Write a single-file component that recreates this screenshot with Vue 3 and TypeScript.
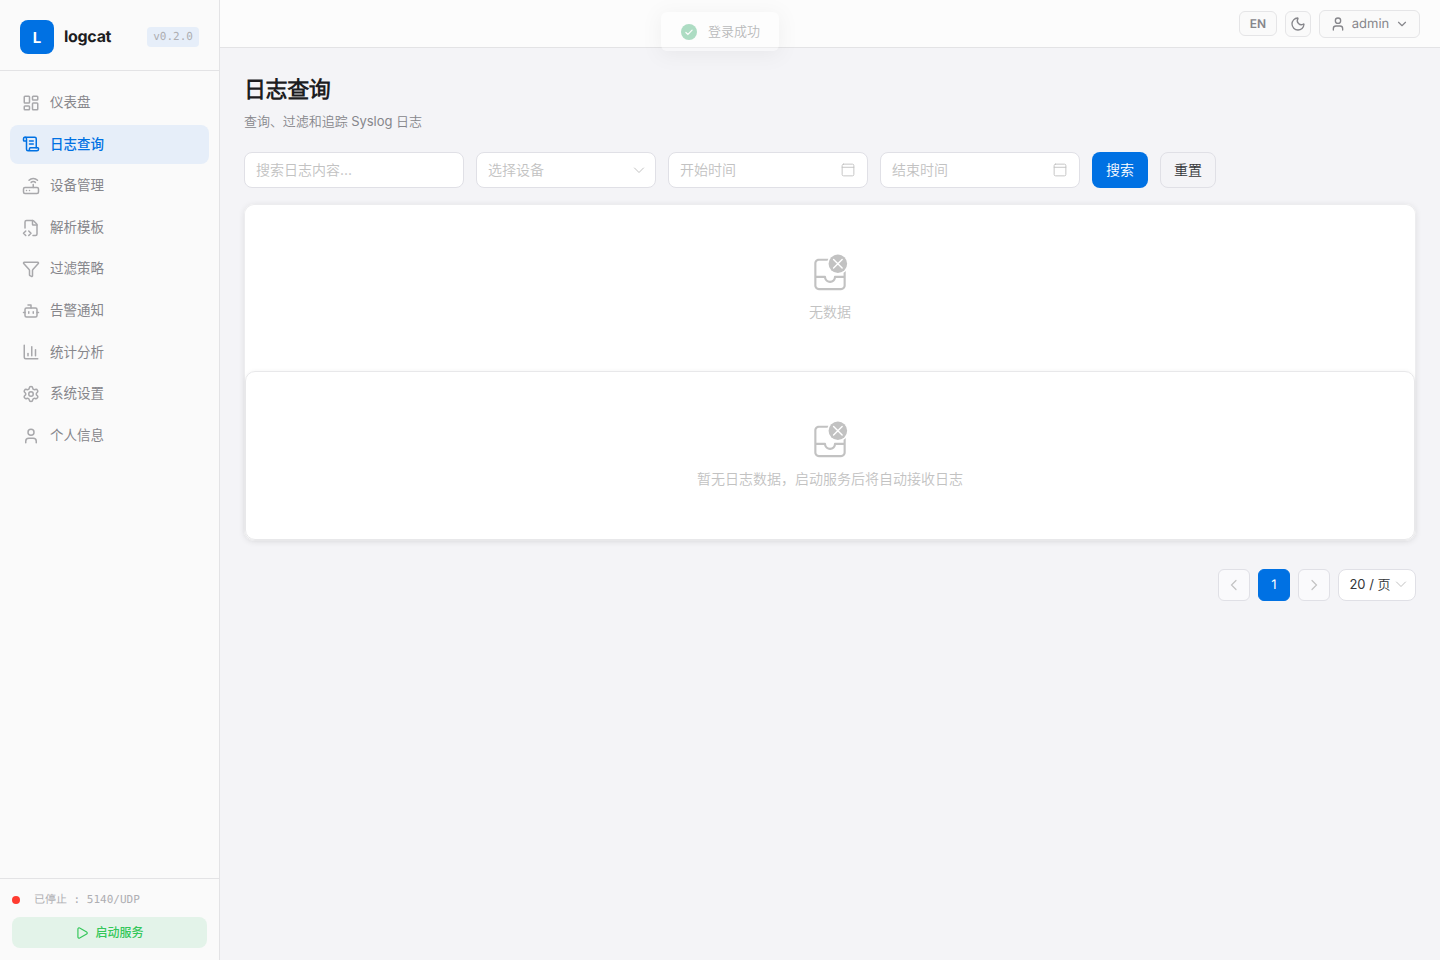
<script setup lang="ts">
interface NavItem {
  label: string
  paths: string[]
  active?: boolean
}

const navItems: NavItem[] = [
  {
    label: '仪表盘',
    paths: [
      'M4 3h5a1 1 0 0 1 1 1v7a1 1 0 0 1-1 1H4a1 1 0 0 1-1-1V4a1 1 0 0 1 1-1z',
      'M15 3h5a1 1 0 0 1 1 1v3a1 1 0 0 1-1 1h-5a1 1 0 0 1-1-1V4a1 1 0 0 1 1-1z',
      'M15 12h5a1 1 0 0 1 1 1v7a1 1 0 0 1-1 1h-5a1 1 0 0 1-1-1v-7a1 1 0 0 1 1-1z',
      'M4 16h5a1 1 0 0 1 1 1v3a1 1 0 0 1-1 1H4a1 1 0 0 1-1-1v-3a1 1 0 0 1 1-1z',
    ],
  },
  {
    label: '日志查询',
    active: true,
    paths: [
      'M15 12h-5',
      'M15 8h-5',
      'M19 17V5a2 2 0 0 0-2-2H4',
      'M8 21h12a2 2 0 0 0 2-2v-1a1 1 0 0 0-1-1H11a1 1 0 0 0-1 1v1a2 2 0 1 1-4 0V5a2 2 0 1 0-4 0v2a1 1 0 0 0 1 1h3',
    ],
  },
  {
    label: '设备管理',
    paths: [
      'M4 14h16a2 2 0 0 1 2 2v4a2 2 0 0 1-2 2H4a2 2 0 0 1-2-2v-4a2 2 0 0 1 2-2z',
      'M6.01 18H6',
      'M10.01 18H10',
      'M15 10v4',
      'M17.84 7.17a4 4 0 0 0-5.66 0',
      'M20.66 4.34a8 8 0 0 0-11.31 0',
    ],
  },
  {
    label: '解析模板',
    paths: [
      'M4 12.15V4a2 2 0 0 1 2-2h8a2.4 2.4 0 0 1 1.706.706l3.588 3.588A2.4 2.4 0 0 1 20 8v12a2 2 0 0 1-2 2h-3.35',
      'M14 2v5a1 1 0 0 0 1 1h5',
      'm5 16-3 3 3 3',
      'm9 22 3-3-3-3',
    ],
  },
  {
    label: '过滤策略',
    paths: [
      'M10 20a1 1 0 0 0 .553.895l2 1A1 1 0 0 0 14 21v-7a2 2 0 0 1 .517-1.341L21.74 4.67A1 1 0 0 0 21 3H3a1 1 0 0 0-.742 1.67l7.225 7.989A2 2 0 0 1 10 14z',
    ],
  },
  {
    label: '告警通知',
    paths: [
      'M12 8V4H8',
      'M6 8h12a2 2 0 0 1 2 2v8a2 2 0 0 1-2 2H6a2 2 0 0 1-2-2v-8a2 2 0 0 1 2-2z',
      'M2 14h2',
      'M20 14h2',
      'M15 13v2',
      'M9 13v2',
    ],
  },
  {
    label: '统计分析',
    paths: ['M3 3v16a2 2 0 0 0 2 2h16', 'M18 17V9', 'M13 17V5', 'M8 17v-3'],
  },
  {
    label: '系统设置',
    paths: [
      'M9.671 4.136a2.34 2.34 0 0 1 4.659 0 2.34 2.34 0 0 0 3.319 1.915 2.34 2.34 0 0 1 2.33 4.033 2.34 2.34 0 0 0 0 3.831 2.34 2.34 0 0 1-2.33 4.033 2.34 2.34 0 0 0-3.319 1.915 2.34 2.34 0 0 1-4.659 0 2.34 2.34 0 0 0-3.32-1.915 2.34 2.34 0 0 1-2.33-4.033 2.34 2.34 0 0 0 0-3.831A2.34 2.34 0 0 1 6.35 6.051a2.34 2.34 0 0 0 3.319-1.915',
      'M9 12a3 3 0 1 0 6 0a3 3 0 1 0-6 0',
    ],
  },
  {
    label: '个人信息',
    paths: ['M19 21v-2a4 4 0 0 0-4-4H9a4 4 0 0 0-4 4v2', 'M8 7a4 4 0 1 0 8 0a4 4 0 1 0-8 0'],
  },
]

const datePlaceholders: string[] = ['开始时间', '结束时间']
const emptyStates: string[] = ['无数据', '暂无日志数据，启动服务后将自动接收日志']
</script>

<template>
  <div class="app">
    <aside class="sidebar">
      <div class="brand">
        <div class="logo">L</div>
        <span class="name">logcat</span>
        <span class="version">v0.2.0</span>
      </div>
      <nav class="nav">
        <a v-for="item in navItems" :key="item.label" class="nav-item" :class="{ active: item.active }">
          <svg class="line-icon" width="18" height="18" viewBox="0 0 24 24">
            <path v-for="d in item.paths" :key="d" :d="d" />
          </svg>
          <span>{{ item.label }}</span>
        </a>
      </nav>
      <div class="service">
        <div class="status"><i class="dot"></i><span>已停止 : 5140/UDP</span></div>
        <button class="start">
          <svg class="line-icon" width="14" height="14" viewBox="0 0 24 24">
            <path d="M5 5a2 2 0 0 1 3.008-1.728l11.997 6.998a2 2 0 0 1 .003 3.458l-12 7A2 2 0 0 1 5 19z" />
          </svg>
          <span>启动服务</span>
        </button>
      </div>
    </aside>

    <div class="body">
      <header class="topbar">
        <button class="chip lang">EN</button>
        <button class="chip theme">
          <svg class="line-icon" width="16" height="16" viewBox="0 0 24 24">
            <path d="M20.985 12.486a9 9 0 1 1-9.473-9.472c.405-.022.617.46.402.803a6 6 0 0 0 8.268 8.268c.344-.215.825-.004.803.401" />
          </svg>
        </button>
        <button class="chip user">
          <svg class="line-icon" width="16" height="16" viewBox="0 0 24 24">
            <path d="M19 21v-2a4 4 0 0 0-4-4H9a4 4 0 0 0-4 4v2" />
            <circle cx="12" cy="7" r="4" />
          </svg>
          <span>admin</span>
          <svg class="line-icon caret" width="14" height="14" viewBox="0 0 24 24"><path d="m6 9 6 6 6-6" /></svg>
        </button>
      </header>

      <main class="content">
        <h1>日志查询</h1>
        <p class="subtitle">查询、过滤和追踪 Syslog 日志</p>

        <div class="filters">
          <div class="field search"><span>搜索日志内容...</span></div>
          <div class="field select">
            <span>选择设备</span>
            <svg width="16" height="16" viewBox="0 0 16 16" class="thin"><path d="M3.5 6 8 10.5 12.5 6" /></svg>
          </div>
          <div v-for="text in datePlaceholders" :key="text" class="field date">
            <span>{{ text }}</span>
            <svg width="16" height="16" viewBox="0 0 28 28" class="calendar">
              <rect x="3.75" y="3.75" width="20.5" height="20.5" rx="2.5" />
              <path d="M3.75 9.25h20.5" />
            </svg>
          </div>
          <button class="btn primary">搜索</button>
          <button class="btn plain">重置</button>
        </div>

        <section class="panel">
          <div v-for="text in emptyStates" :key="text" class="empty">
            <svg width="40" height="40" viewBox="0 0 28 28">
              <circle cx="19.5" cy="7.5" r="6.5" />
              <path class="cross" d="m16.5 4.5 6 6m0-6-6 6" />
              <path d="M25 22.75V12.5991C24.5572 13.0765 24.053 13.4961 23.5 13.8454V16H17.5L17.3982 16.0068C17.0322 16.0565 16.75 16.3703 16.75 16.75C16.75 18.2688 15.5188 19.5 14 19.5C12.4812 19.5 11.25 18.2688 11.25 16.75L11.2432 16.6482C11.1935 16.2822 10.8797 16 10.5 16H4.5V7.25C4.5 6.2835 5.2835 5.5 6.25 5.5H12.2696C12.4146 4.97463 12.6153 4.47237 12.865 4H6.25C4.45507 4 3 5.45507 3 7.25V22.75C3 24.5449 4.45507 26 6.25 26H21.75C23.5449 26 25 24.5449 25 22.75ZM4.5 22.75V17.5H9.81597L9.85751 17.7041C10.2905 19.5919 11.9808 21 14 21L14.215 20.9947C16.2095 20.8953 17.842 19.4209 18.184 17.5H23.5V22.75C23.5 23.7165 22.7165 24.5 21.75 24.5H6.25C5.2835 24.5 4.5 23.7165 4.5 22.75Z" />
            </svg>
            <p>{{ text }}</p>
          </div>
        </section>

        <div class="pager">
          <span class="page"><svg width="16" height="16" viewBox="0 0 16 16" class="thin arrow"><path d="M10 3.5 5.5 8l4.5 4.5" /></svg></span>
          <span class="page current">1</span>
          <span class="page"><svg width="16" height="16" viewBox="0 0 16 16" class="thin arrow"><path d="M6 3.5 10.5 8 6 12.5" /></svg></span>
          <span class="size">20 / 页<svg width="16" height="16" viewBox="0 0 16 16" class="thin"><path d="M3.5 6 8 10.5 12.5 6" /></svg></span>
        </div>
      </main>
    </div>

    <div class="toast">
      <svg width="20" height="20" viewBox="0 0 20 20">
        <circle cx="10" cy="10" r="8" />
        <path d="m6.9 10.5 2 1.9 4.2-4.2" />
      </svg>
      <span>登录成功</span>
    </div>
  </div>
</template>

<style>
body {
  margin: 0;
  background: #f4f4f7;
}
</style>

<style scoped>
.app {
  display: flex;
  height: 960px;
  overflow: hidden;
  background: #f4f4f7;
  font-family: Inter, 'Noto Sans CJK SC DemiLight', 'Noto Sans CJK SC', sans-serif;
  font-size: 14px;
  line-height: 1.6;
  color: #1d1d1f;
}
.app *,
.app *::before {
  box-sizing: border-box;
}
svg {
  display: block;
  flex: none;
}
button {
  margin: 0;
  padding: 0;
  border: 0;
  font: inherit;
}
.logo,
.name,
.version,
.status,
.user,
.lang,
.current {
  text-rendering: geometricPrecision;
}
.line-icon {
  fill: none;
  stroke: currentColor;
  stroke-width: 2;
  stroke-linecap: round;
  stroke-linejoin: round;
}
.sidebar {
  display: flex;
  flex-direction: column;
  flex: none;
  width: 220px;
  background: #fafafa;
  border-right: 1px solid #e3e3e5;
}
.brand {
  display: flex;
  align-items: center;
  height: 71px;
  padding: 3px 20px 0;
  border-bottom: 1px solid #e3e3e5;
}
.logo {
  width: 34px;
  height: 34px;
  border-radius: 8px;
  background: #0071e3;
  color: #fff;
  font-size: 15px;
  font-weight: 700;
  line-height: 35px;
  text-align: center;
}
.name {
  margin-left: 10px;
  font-size: 16px;
  font-weight: 700;
  letter-spacing: -0.3px;
}
.version {
  margin-left: auto;
  height: 20px;
  padding: 0 6px;
  border-radius: 4px;
  background: #e6eef9;
  color: #aeaeb2;
  font: 11px/19px 'DejaVu Sans Mono', monospace;
}
.nav {
  display: flex;
  flex-direction: column;
  gap: 2px;
  flex: 1;
  padding: 12px 10px;
}
.nav-item {
  display: flex;
  align-items: center;
  gap: 10px;
  padding: 9px 12px;
  border-radius: 8px;
  color: #86868b;
  font-family: Inter, 'Noto Sans CJK SC', sans-serif;
  font-size: 13.5px;
  font-weight: 400;
}
.nav-item .line-icon {
  opacity: 0.7;
}
.nav-item.active {
  background: #e6eef9;
  color: #0071e3;
  font-weight: 500;
}
.nav-item.active .line-icon {
  opacity: 1;
}
.service {
  height: 82px;
  padding: 11px 12px 12px;
  border-top: 1px solid #e3e3e5;
}
.status {
  display: flex;
  align-items: center;
  gap: 14px;
  height: 19px;
  margin-bottom: 8px;
  color: #aeaeb2;
  font: 11px/18px 'DejaVu Sans Mono', 'Noto Sans CJK SC', monospace;
}
.dot {
  width: 8px;
  height: 8px;
  border-radius: 50%;
  background: #ff3b30;
}
.start {
  display: flex;
  align-items: center;
  justify-content: center;
  gap: 6px;
  width: 100%;
  height: 31px;
  border-radius: 8px;
  background: #e3f3e9;
  color: #34c759;
  font-family: Inter, 'Noto Sans CJK SC', sans-serif;
  font-size: 12px;
  font-weight: 500;
}
.body {
  flex: 1;
  min-width: 0;
}
.topbar {
  display: flex;
  align-items: center;
  justify-content: flex-end;
  gap: 8px;
  height: 48px;
  padding: 0 20px;
  background: #fcfcfc;
  border-bottom: 1px solid #e3e3e5;
}
.chip {
  display: flex;
  align-items: center;
  justify-content: center;
  border: 1px solid #e5e5e7;
  border-radius: 6px;
  background: #fafafa;
  color: #86868b;
}
.lang {
  width: 38px;
  height: 25px;
  font-size: 12px;
  font-weight: 600;
}
.theme {
  width: 26px;
  height: 26px;
}
.user {
  width: 101px;
  height: 28px;
  gap: 6px;
  font-size: 13px;
}
.user span {
  padding-top: 2px;
}
.content {
  padding: 24px;
}
h1 {
  margin: 0;
  font-size: 22px;
  font-weight: 600;
  line-height: 35px;
  letter-spacing: -0.4px;
}
.subtitle {
  margin: 4px 0 20px;
  color: #86868b;
  font-size: 13px;
  line-height: 21px;
  letter-spacing: -0.05px;
}
.filters {
  display: flex;
  gap: 12px;
  margin-bottom: 16px;
}
.field {
  display: flex;
  align-items: center;
  justify-content: space-between;
  height: 36px;
  padding: 0 11px;
  border: 1px solid #e0e0e6;
  border-radius: 8px;
  background: #fff;
  color: #c2c2c2;
}
.search {
  width: 220px;
}
.select {
  width: 180px;
  padding-right: 8px;
}
.date {
  width: 200px;
}
.thin,
.calendar {
  fill: none;
  stroke: #c2c2c2;
  stroke-width: 1;
  stroke-linecap: round;
}
.calendar {
  stroke-width: 1.6;
}
.btn {
  width: 56px;
  height: 36px;
  border-radius: 8px;
}
.primary {
  background: #0071e3;
  color: #fff;
}
.plain {
  border: 1px solid #e0e0e6;
  background: transparent;
  color: #333639;
}
.panel {
  padding: 1px;
  border-radius: 10px;
  background: #fff;
  box-shadow: inset 0 0 0 1px #ededef, 0 1px 6px rgba(0, 0, 0, 0.09);
}
.empty {
  display: flex;
  flex-direction: column;
  align-items: center;
  padding: 48px 0;
}
.empty + .empty {
  border: 1px solid #e8e8ea;
  border-radius: 10px;
  box-shadow: 0 0 4px rgba(0, 0, 0, 0.05);
}
.empty svg {
  fill: #c2c2c2;
}
.empty .cross {
  fill: none;
  stroke: #fff;
  stroke-width: 1;
  stroke-linecap: round;
}
.empty p {
  margin: 8px 0 0;
  color: #c2c2c2;
}
.pager {
  display: flex;
  justify-content: flex-end;
  gap: 8px;
  margin-top: 28.2px;
}
.page,
.size {
  display: flex;
  align-items: center;
  justify-content: center;
  width: 32px;
  height: 32px;
  border: 1px solid #e0e0e6;
  border-radius: 6px;
  background: #fafafc;
  font-size: 13px;
}
.arrow {
  stroke-width: 1.2;
}
.current {
  border-color: #0071e3;
  background: #0071e3;
  color: #fff;
}
.size {
  width: 78px;
  gap: 2px;
  padding: 0 0 1px 4px;
  border-radius: 8px;
  background: #fff;
  color: #333639;
}
.toast {
  position: absolute;
  top: 12px;
  left: 661px;
  display: flex;
  align-items: center;
  gap: 9px;
  width: 118px;
  height: 39px;
  padding-left: 18px;
  border-radius: 6px;
  background: #fff;
  box-shadow: 0 3px 18px rgba(0, 0, 0, 0.14);
  color: #333639;
  font-size: 13px;
  opacity: 0.34;
}
.toast circle {
  fill: #18a058;
}
.toast path {
  fill: none;
  stroke: #fff;
  stroke-width: 1.2;
  stroke-linecap: round;
}
</style>
